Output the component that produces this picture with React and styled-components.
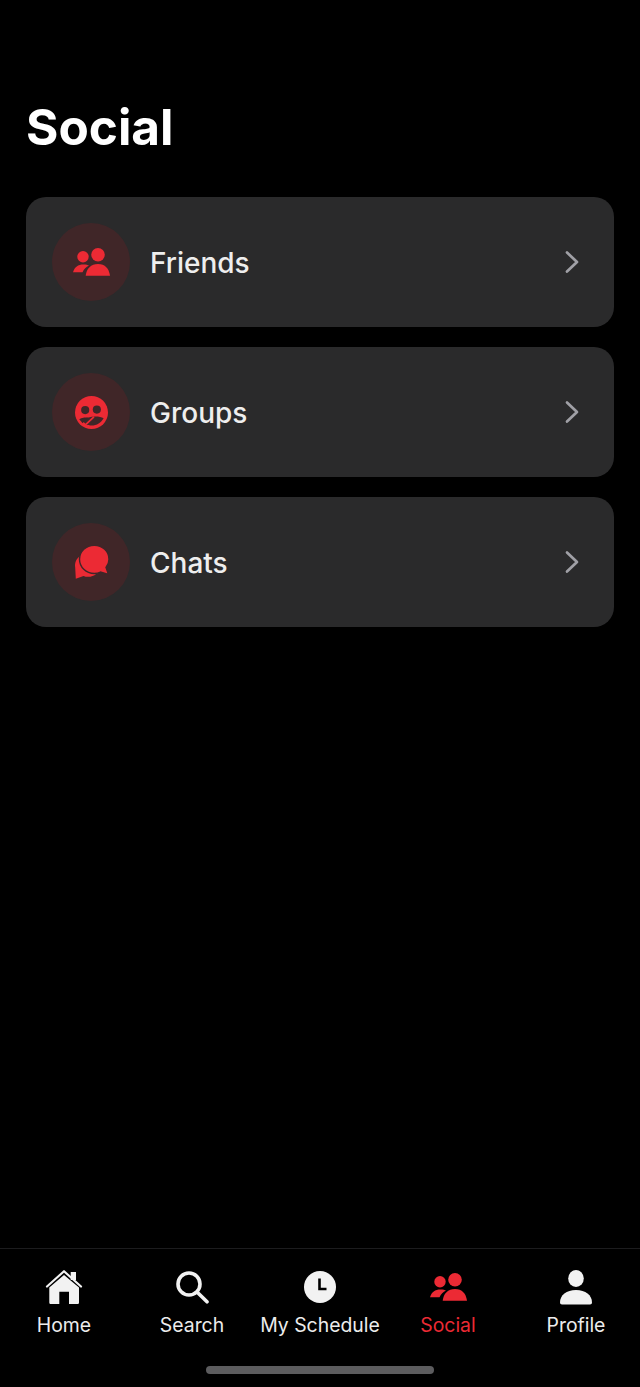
import React from "react";
import styled, { createGlobalStyle } from "styled-components";

const Global = createGlobalStyle`
  html, body { margin: 0; padding: 0; background: #000; }
  * { box-sizing: border-box; }
`;

const RED = "#ec2a34";
const CIRCLE = "#402628";
const ICON = "#f2f2f2";

const Page = styled.div`
  width: 640px;
  height: 1387px;
  background: #000;
  display: flex;
  flex-direction: column;
  font-family: Inter, "Liberation Sans", sans-serif;
  overflow: hidden;
`;

const Main = styled.main`
  flex: 1;
  padding: 98px 26px 0;
`;

const Title = styled.h1`
  margin: 0 0 40px;
  height: 59px;
  line-height: 59px;
  font-size: 49.5px;
  font-weight: 700;
  color: #fff;
`;

const List = styled.div`
  display: flex;
  flex-direction: column;
  gap: 20px;
`;

const Card = styled.div`
  height: 130px;
  border-radius: 20px;
  background: #2a2a2b;
  display: flex;
  align-items: center;
  padding: 0 35px 0 26px;
`;

const IconCircle = styled.div`
  width: 78px;
  height: 78px;
  border-radius: 50%;
  background: ${CIRCLE};
  display: flex;
  align-items: center;
  justify-content: center;
  flex: none;
`;

const CardLabel = styled.span`
  flex: 1;
  margin: 1px 0 0 20px;
  font-size: 28px;
  font-weight: 500;
  color: #eeeeee;
`;

const TabBar = styled.nav`
  height: 139px;
  border-top: 1px solid #1c1c1e;
  display: flex;
  flex-direction: column;
`;

const Tabs = styled.div`
  display: grid;
  grid-template-columns: repeat(5, 128px);
  padding-top: 20px;
`;

const Tab = styled.div`
  display: flex;
  flex-direction: column;
  align-items: center;
  color: ${(p) => (p.$active ? RED : "#ececec")};
`;

const TabIcon = styled.div`
  height: 36px;
  display: flex;
  align-items: center;
  justify-content: center;
`;

const TabLabel = styled.span`
  margin-top: 8px;
  font-size: 19.4px;
  line-height: 24px;
  font-weight: 400;
  white-space: nowrap;
`;

const HomeBar = styled.div`
  width: 228px;
  height: 8px;
  border-radius: 4px;
  background: #5c5c5e;
  margin: 29px auto 0;
`;

const FriendsIcon = () => (
  <svg width="37" height="28" viewBox="0 0 37 28" fill={RED}>
    <circle cx="10" cy="8.7" r="5.7" />
    <circle cx="25" cy="6.8" r="6.8" />
    <path d="M0 24.3 C1.5 19 5 16.5 10.5 16.5 C13 16.5 15 17 16 17.5 C13 19 11 21 9.5 24.3 Z" />
    <path d="M12.7 27.7 C13.5 20.5 18 16 25 16 C32 16 36 20.5 37 27.7 Z" />
  </svg>
);

const GroupsIcon = () => (
  <svg width="33" height="33" viewBox="0 0 34 34">
    <circle cx="17" cy="17" r="17" fill={RED} />
    <circle cx="10.5" cy="14.5" r="4.2" fill={CIRCLE} />
    <circle cx="22.5" cy="14" r="4.2" fill={CIRCLE} />
    <path d="M4.5 24 C6.5 22.5 10 21.8 14 22.2 C19 20.5 26 20.8 29.5 23 C27 27.5 22.5 30.5 17 30.5 C15.5 30.5 14 30.2 13 30 Z" fill={CIRCLE} />
    <path d="M4.5 24 C8 23.5 11 23 13 22.5 L7.8 28 Z" fill={CIRCLE} />
    <path d="M19.5 21.5 L11.5 29" fill="none" stroke={RED} strokeWidth="1.8" />
  </svg>
);

const ChatsIcon = () => (
  <svg width="35" height="35" viewBox="0 0 35 35" fill={RED}>
    <path d="M6 11 C2 14 0.5 18 1.2 22.5 L1.8 33.8 L9.5 31 C14 32.8 19.5 31.5 22 29 Z" />
    <path
      d="M20.3 0.2 C12 0.2 5.5 6.5 5.5 14.2 C5.5 22 12 28.5 20.3 28.5 C22.5 28.5 24.8 28 26.5 27 L34.5 29.5 L32 22.5 C34 20 35 17.5 35 14.2 C35 6.5 28.5 0.2 20.3 0.2 Z"
      stroke={CIRCLE}
      strokeWidth="1.4"
    />
  </svg>
);

const Chevron = () => (
  <svg width="14" height="24" viewBox="0 0 14 24" fill="none" stroke="#a0a0a6" strokeWidth="2.7" strokeLinecap="round" strokeLinejoin="round">
    <path d="M2 2.5 L12 12 L2 21.5" />
  </svg>
);

const HomeIcon = () => (
  <svg width="38" height="36" viewBox="0 0 38 36" fill={ICON}>
    <path d="M4.3 18.5 L19 6 L34 18.5 V33.5 C34 34.5 33.3 35 32.5 35 H24 V22.7 H14.3 V35 H5.8 C5 35 4.3 34.5 4.3 33.5 Z" />
    <path d="M2 17.5 L19 2.2 L36 17.5" fill="none" stroke={ICON} strokeWidth="2.2" strokeLinecap="round" strokeLinejoin="round" />
    <rect x="25.7" y="3" width="5.3" height="8" />
  </svg>
);

const SearchIcon = () => (
  <svg width="33" height="33" viewBox="0 0 33 33" fill="none" stroke={ICON} strokeWidth="3.6" strokeLinecap="round">
    <circle cx="13" cy="13" r="11" />
    <path d="M21.5 21.5 L31 30.8" />
  </svg>
);

const ClockIcon = () => (
  <svg width="32" height="32" viewBox="0 0 32 32">
    <circle cx="16" cy="16" r="16" fill={ICON} />
    <path d="M15.5 7.5 V18 H22.5" fill="none" stroke="#000" strokeWidth="2.6" />
  </svg>
);

const ProfileIcon = () => (
  <svg width="32" height="35" viewBox="0 0 32 35" fill={ICON}>
    <ellipse cx="16" cy="8.5" rx="7.8" ry="8.5" />
    <path d="M0 32.5 C0 25 6.5 20 16 20 C25.5 20 32 25 32 32.5 C32 33.8 31.2 34.5 30 34.5 H2 C0.8 34.5 0 33.8 0 32.5 Z" />
  </svg>
);

const rows = [
  { label: "Friends", icon: <FriendsIcon /> },
  { label: "Groups", icon: <GroupsIcon /> },
  { label: "Chats", icon: <ChatsIcon /> },
];

const tabs = [
  { label: "Home", icon: <HomeIcon /> },
  { label: "Search", icon: <SearchIcon /> },
  { label: "My Schedule", icon: <ClockIcon /> },
  { label: "Social", icon: <FriendsIcon />, active: true },
  { label: "Profile", icon: <ProfileIcon /> },
];

export default function App() {
  return (
    <Page>
      <Global />
      <Main>
        <Title>Social</Title>
        <List>
          {rows.map((r) => (
            <Card key={r.label}>
              <IconCircle>{r.icon}</IconCircle>
              <CardLabel>{r.label}</CardLabel>
              <Chevron />
            </Card>
          ))}
        </List>
      </Main>
      <TabBar>
        <Tabs>
          {tabs.map((t) => (
            <Tab key={t.label} $active={t.active}>
              <TabIcon>{t.icon}</TabIcon>
              <TabLabel>{t.label}</TabLabel>
            </Tab>
          ))}
        </Tabs>
        <HomeBar />
      </TabBar>
    </Page>
  );
}
